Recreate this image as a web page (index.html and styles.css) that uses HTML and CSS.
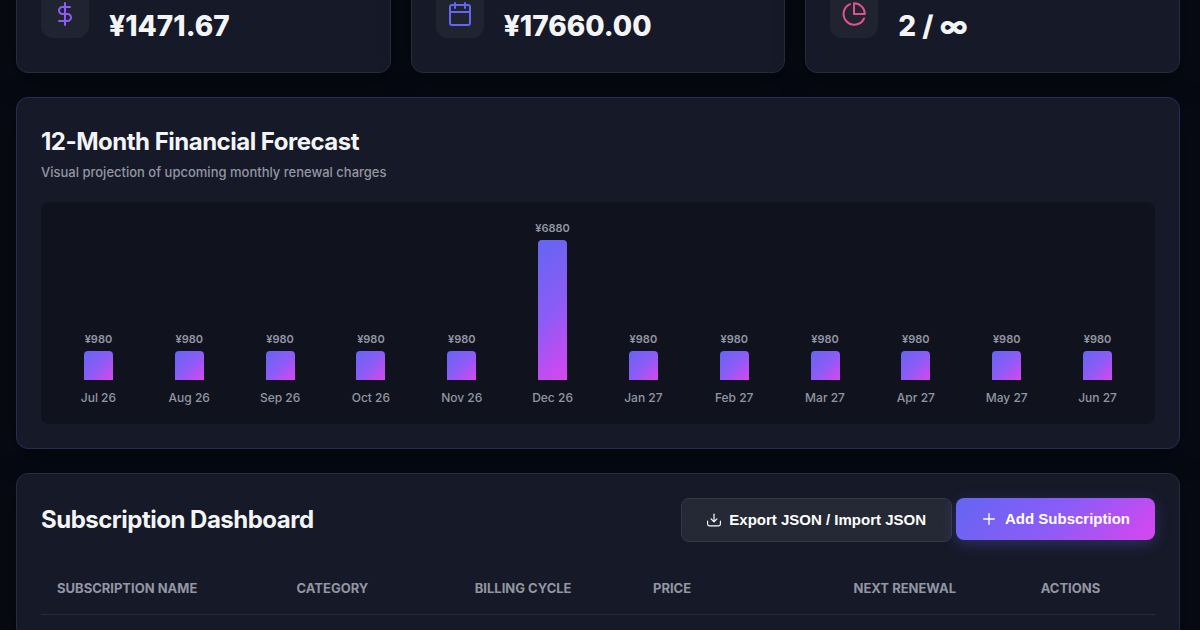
FILE: index.html
```html
<!DOCTYPE html>
<html lang="en">
<head>
  <meta charset="UTF-8" />
  <meta name="viewport" content="width=device-width, initial-scale=1.0" />
  <title>Subscription Dashboard</title>
  <link rel="stylesheet" href="styles.css">
</head>
<body>

  <main class="container">

    <section class="stats-grid">
      <div class="card stat-card">
        <div class="stat-icon purple">
          <svg viewBox="0 0 24 24"><line x1="12" y1="1" x2="12" y2="23"/><path d="M17 5H9.5a3.5 3.5 0 0 0 0 7h5a3.5 3.5 0 0 1 0 7H6"/></svg>
        </div>
        <div class="stat-value">¥1471.67</div>
      </div>
      <div class="card stat-card">
        <div class="stat-icon indigo">
          <svg viewBox="0 0 24 24"><rect x="2" y="3" width="20" height="20" rx="2"/><line x1="17" y1="1" x2="17" y2="6"/><line x1="7" y1="1" x2="7" y2="6"/><line x1="2" y1="10" x2="22" y2="10"/></svg>
        </div>
        <div class="stat-value">¥17660.00</div>
      </div>
      <div class="card stat-card">
        <div class="stat-icon pink">
          <svg viewBox="0 0 24 24"><path d="M22 16.5A10.7 10.7 0 1 1 8 2.2"/><path d="M22.8 12A10.8 10.8 0 0 0 12 1.2V12z"/></svg>
        </div>
        <div class="stat-value">2 / ∞</div>
      </div>
    </section>

    <section class="card forecast-card">
      <h2>12-Month Financial Forecast</h2>
      <p class="subtitle">Visual projection of upcoming monthly renewal charges</p>

      <div class="chart">
        <div class="chart-col"><span class="bar-value">¥980</span><div class="bar"></div><span class="bar-label">Jul 26</span></div>
        <div class="chart-col"><span class="bar-value">¥980</span><div class="bar"></div><span class="bar-label">Aug 26</span></div>
        <div class="chart-col"><span class="bar-value">¥980</span><div class="bar"></div><span class="bar-label">Sep 26</span></div>
        <div class="chart-col"><span class="bar-value">¥980</span><div class="bar"></div><span class="bar-label">Oct 26</span></div>
        <div class="chart-col"><span class="bar-value">¥980</span><div class="bar"></div><span class="bar-label">Nov 26</span></div>
        <div class="chart-col"><span class="bar-value">¥6880</span><div class="bar" style="height: 140px"></div><span class="bar-label">Dec 26</span></div>
        <div class="chart-col"><span class="bar-value">¥980</span><div class="bar"></div><span class="bar-label">Jan 27</span></div>
        <div class="chart-col"><span class="bar-value">¥980</span><div class="bar"></div><span class="bar-label">Feb 27</span></div>
        <div class="chart-col"><span class="bar-value">¥980</span><div class="bar"></div><span class="bar-label">Mar 27</span></div>
        <div class="chart-col"><span class="bar-value">¥980</span><div class="bar"></div><span class="bar-label">Apr 27</span></div>
        <div class="chart-col"><span class="bar-value">¥980</span><div class="bar"></div><span class="bar-label">May 27</span></div>
        <div class="chart-col"><span class="bar-value">¥980</span><div class="bar"></div><span class="bar-label">Jun 27</span></div>
      </div>
    </section>

    <section class="card">
      <div class="dashboard-header">
        <h2>Subscription Dashboard</h2>
        <div class="actions">
          <button type="button" class="btn btn-secondary">
            <svg viewBox="0 0 24 24"><path d="M23 14v5a3 3 0 0 1-3 3H4a3 3 0 0 1-3-3v-5"/><polyline points="7 10 12 15 17 10"/><line x1="12" y1="15" x2="12" y2="2"/></svg>
            Export JSON / Import JSON
          </button>
          <button type="button" class="btn btn-primary">
            <svg viewBox="0 0 24 24"><line x1="12" y1="4" x2="12" y2="20"/><line x1="4" y1="12" x2="20" y2="12"/></svg>
            Add Subscription
          </button>
        </div>
      </div>

      <table class="sub-table">
        <thead>
          <tr>
            <th class="col-name">Subscription Name</th>
            <th class="col-category">Category</th>
            <th class="col-cycle">Billing Cycle</th>
            <th class="col-price">Price</th>
            <th class="col-renewal">Next Renewal</th>
            <th>Actions</th>
          </tr>
        </thead>
      </table>
    </section>

  </main>

</body>
</html>
```
FILE: styles.css
```css
* {
  box-sizing: border-box;
}

body {
  margin: 0;
  height: 100vh;
  overflow: hidden;
  font-family: Inter, 'Liberation Sans', sans-serif;
  background-color: #070a13;
  color: #f3f4f6;
  line-height: 1.6;
}

/* page sits scrolled so the tops of the stat cards are out of view */
.container {
  margin-top: -45px;
  padding: 0 20px 0 16px;
  display: flex;
  flex-direction: column;
  gap: 24px;
}

.card {
  padding: 24px;
  background-color: #161927;
  border: 1px solid #282b38;
  border-radius: 12px;
  box-shadow: 0 8px 32px rgba(0, 0, 0, 0.3);
}

h2 {
  margin: 0;
  font-size: 24px;
  font-weight: 700;
  line-height: 40px;
  letter-spacing: -0.5px;
}

/* Stats */
.stats-grid {
  display: grid;
  grid-template-columns: repeat(3, 1fr);
  gap: 20px;
}

.stat-card {
  display: flex;
  align-items: center;
  gap: 20px;
}

.stat-icon {
  width: 48px;
  height: 48px;
  display: flex;
  align-items: center;
  justify-content: center;
  border-radius: 12px;
  background-color: #202431;
}

.stat-icon svg {
  width: 24px;
  height: 24px;
}

svg {
  fill: none;
  stroke: currentColor;
  stroke-width: 2;
  stroke-linecap: round;
  stroke-linejoin: round;
}

.purple {
  color: #8b5cf6;
}

.indigo {
  color: #6366f1;
}

.pink {
  color: #e2508f;
}

.stat-value {
  padding-top: 25px;
  font-size: 28px;
  font-weight: 800;
  line-height: 43px;
}

/* Forecast */
.forecast-card {
  border-color: #282b56;
}

.subtitle {
  margin: 0 0 20px;
  font-size: 13px;
  font-weight: 500;
  line-height: 20px;
  color: #9296a3;
}

.chart {
  height: 222px;
  padding: 17px 12px;
  display: flex;
  align-items: flex-end;
  background-color: #10131e;
  border-radius: 8px;
}

.chart-col {
  flex: 1;
  display: flex;
  flex-direction: column;
  align-items: center;
}

.bar-value {
  margin-bottom: 3px;
  font-size: 11px;
  font-weight: 600;
  line-height: 17px;
  color: #9296a3;
}

.bar {
  width: 29px;
  height: 29px;
  border-radius: 4px 4px 0 0;
  background: linear-gradient(135deg, #6366f1 0%, #8b5cf6 50%, #d946ef 100%);
}

.bar-label {
  margin-top: 8px;
  font-size: 12px;
  font-weight: 500;
  line-height: 19px;
  color: #9296a3;
}

/* Dashboard */
.dashboard-header {
  display: flex;
  align-items: center;
  justify-content: space-between;
  margin-bottom: 20px;
}

.actions {
  display: flex;
  align-items: flex-start;
  gap: 4px;
}

.btn {
  display: inline-flex;
  align-items: center;
  gap: 8px;
  padding: 12px 25px;
  border: none;
  border-radius: 8px;
  font-family: 'Liberation Sans', Arial, sans-serif;
  font-size: 15px;
  font-weight: 600;
  line-height: 18px;
  color: #fff;
  cursor: pointer;
}

.btn svg {
  width: 16px;
  height: 16px;
}

.btn-secondary {
  background-color: #252936;
  border: 1px solid #343846;
}

.btn-secondary svg {
  width: 14px;
  height: 14px;
}

.btn-primary {
  background: linear-gradient(135deg, #6366f1 0%, #8b5cf6 50%, #d946ef 100%);
  box-shadow: 0 4px 15px rgba(99, 102, 241, 0.3);
}

.sub-table {
  width: 100%;
  border-collapse: collapse;
  table-layout: fixed;
  text-align: left;
}

.sub-table th {
  padding: 16px;
  font-size: 13px;
  font-weight: 700;
  line-height: 20px;
  text-transform: uppercase;
  color: #9296a3;
  border-bottom: 1px solid #282b38;
}

.col-name {
  width: 21.5%;
}

.col-category,
.col-cycle {
  width: 16%;
}

.col-price {
  width: 18%;
}

.col-renewal {
  width: 16.8%;
}
```
